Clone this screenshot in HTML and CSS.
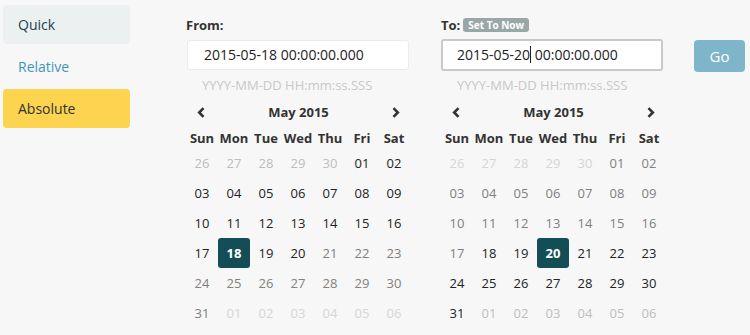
FILE: index.html
```html
<!DOCTYPE html>
<html>
  <head>
    <title>Time Picker</title>
    <link rel="stylesheet" href="styles.css">
  </head>
  <body>
    <div class="picker">
      <div class="modes">
        <div class="mode quick">Quick</div>
        <div class="mode relative">Relative</div>
        <div class="mode active">Absolute</div>
      </div>

      <div class="range">
        <div class="range-col">
          <div class="field-label">From:</div>
          <div class="date-input">2015-05-18 00:00:00.000</div>
          <div class="format-hint">YYYY-MM-DD HH:mm:ss.SSS</div>
          <div class="calendar" id="fromCal"></div>
        </div>

        <div class="range-col">
          <div class="field-label">To: <span class="badge">Set To Now</span></div>
          <div class="date-input focused">2015-05-20<span class="caret"></span> 00:00:00.000</div>
          <div class="format-hint">YYYY-MM-DD HH:mm:ss.SSS</div>
          <div class="calendar" id="toCal"></div>
        </div>

        <div class="go-col">
          <button class="go-button">Go</button>
        </div>
      </div>
    </div>

    <script src="calendar.js"></script>
  </body>
</html>
```

FILE: styles.css
```css
body {
  margin: 0;
  background-color: #f7f7f7;
  font-family: "Open Sans", "Liberation Sans", sans-serif;
  color: #333;
}
.picker {
  display: flex;
}
.modes {
  width: 127px;
  margin-left: 3px;
  padding-top: 5px;
  display: flex;
  flex-direction: column;
  gap: 3px;
}
.mode {
  height: 39px;
  line-height: 39px;
  padding-left: 15px;
  border-radius: 4px;
  font-size: 14px;
}
.mode.quick {
  background-color: #edf0f1;
  color: #22404f;
}
.mode.relative {
  color: #3f96ba;
}
.mode.active {
  background-color: #fcd450;
  color: #333;
}

.range {
  display: flex;
  margin-left: 56px;
}
.range-col {
  width: 224px;
  margin-right: 31px;
}
.field-label {
  display: flex;
  align-items: center;
  gap: 3px;
  margin-top: 15px;
  height: 20px;
  font-size: 13px;
  font-weight: bold;
}
.badge {
  background-color: #9ba7a7;
  color: white;
  font-size: 10px;
  font-weight: bold;
  line-height: 14px;
  padding: 0 5px;
  border-radius: 3px;
}
.date-input {
  box-sizing: border-box;
  width: 222px;
  height: 30px;
  margin: 5px 0 0 1px;
  padding-left: 16px;
  line-height: 28px;
  background: white;
  border: 1px solid #ebebeb;
  border-radius: 3px;
  font-size: 14px;
  color: #222;
}
.date-input.focused {
  height: 32px;
  margin: 4px 0 -1px 0;
  border: 2px solid #c6caca;
  padding-left: 14px;
}
.caret {
  display: inline-block;
  width: 1px;
  height: 17px;
  background: #222;
  vertical-align: -3px;
}
.format-hint {
  line-height: 20px;
  margin-top: 5px;
  padding-left: 16px;
  font-size: 13px;
  color: #c8c8c8;
}

.calendar {
  margin-top: 5px;
  width: 224px;
}
.cal-head {
  display: flex;
  justify-content: space-between;
  align-items: center;
  height: 24px;
  padding: 0 10px 0 11px;
  font-size: 13px;
  font-weight: bold;
}
.cal-grid {
  display: grid;
  grid-template-columns: repeat(7, 32px);
  margin-top: 4px;
  font-size: 13px;
  text-align: center;
}
.dow {
  height: 20px;
  line-height: 20px;
  font-weight: bold;
}
.day {
  height: 30px;
  line-height: 30px;
  border-radius: 3px;
  color: #222;
}
.day.out {
  color: #808080;
}
.day.other {
  color: #bdbdbd;
}
.day.other.out {
  color: #d6d6d6;
}
.day.selected {
  background-color: #134e57;
  color: white;
  font-weight: bold;
}

.go-col {
  padding-top: 40px;
  margin-left: -2px;
}
.go-button {
  width: 51px;
  height: 32px;
  border: none;
  border-radius: 4px;
  background-color: #7eb5c8;
  color: white;
  font-family: "Open Sans", "Liberation Sans", sans-serif;
  font-size: 15px;
}
```

FILE: calendar.js
```js
var dayNames = ['Sun', 'Mon', 'Tue', 'Wed', 'Thu', 'Fri', 'Sat'];
var leftArrow = '<svg width="8" height="11" viewBox="0 0 8 11"><polyline points="6.5,1.2 2.2,5.5 6.5,9.8" fill="none" stroke="#333" stroke-width="2.6"/></svg>';
var rightArrow = '<svg width="8" height="11" viewBox="0 0 8 11"><polyline points="1.5,1.2 5.8,5.5 1.5,9.8" fill="none" stroke="#333" stroke-width="2.6"/></svg>';

function pad(n) {
  return n < 10 ? '0' + n : '' + n;
}

// May 2015 starts on a Friday; grid starts Sun Apr 26
function buildCalendar(el, selected, from, to) {
  var html = '<div class="cal-head">' + leftArrow + '<span>May 2015</span>' + rightArrow + '</div>';
  html += '<div class="cal-grid">';
  dayNames.forEach(function (d) {
    html += '<div class="dow">' + d + '</div>';
  });
  for (var i = 0; i < 42; i++) {
    var n = i - 5; // day of May (1-based) = i - 4
    var day, cls = 'day', key;
    if (i < 5) {
      day = 26 + i;
      cls += ' other';
      key = -1;
    } else if (i - 4 > 31) {
      day = i - 4 - 31;
      cls += ' other';
      key = 100;
    } else {
      day = i - 4;
      key = day;
    }
    if (key < from || key > to) cls += ' out';
    if (key === selected) cls += ' selected';
    html += '<div class="' + cls + '">' + pad(day) + '</div>';
  }
  html += '</div>';
  el.innerHTML = html;
}

buildCalendar(document.getElementById('fromCal'), 18, -50, 20);
buildCalendar(document.getElementById('toCal'), 20, 18, 500);
```
